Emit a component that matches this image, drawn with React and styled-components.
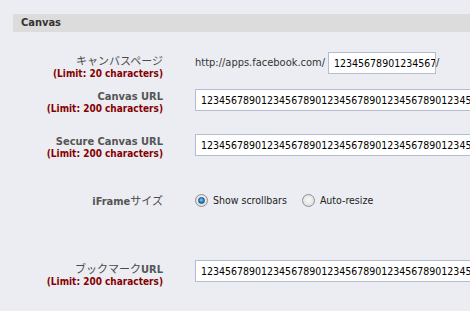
import React from 'react'
import styled, { createGlobalStyle } from 'styled-components'

const GlobalStyle = createGlobalStyle`
  html, body {
    margin: 0;
    padding: 0;
    background: #ecedf2;
    overflow: hidden;
  }
  body {
    font-family: "DejaVu Sans Condensed", "DejaVu Sans", "Noto Sans CJK JP", sans-serif;
    font-stretch: condensed;
    font-size: 11px;
    color: #333;
  }
`

const Page = styled.div`
  width: 457px;
  padding: 14px 0 0 13px;
  overflow: hidden;
`

const SectionHeader = styled.h3`
  margin: 0;
  height: 18px;
  line-height: 18px;
  padding-left: 8px;
  background: #dcdcdc;
  font-size: 11px;
  font-weight: bold;
  color: #333;
`

const Form = styled.div`
  margin-top: 20px;
`

const Row = styled.div`
  display: grid;
  grid-template-columns: 150px 1fr;
  column-gap: 32px;
  height: ${p => p.$h}px;
`

const Label = styled.div`
  text-align: right;
  font-weight: bold;
  color: #555;
  line-height: normal;
  padding-top: ${p => p.$pad || 0}px;
`

const Kana = styled.span`
  font-family: "Noto Sans CJK JP", sans-serif;
  font-weight: 400;
  color: #4a4a4a;
`

const Limit = styled.span`
  display: block;
  font-size: 10px;
  color: #850000;
`

const Field = styled.div`
  min-width: 0;
  display: flex;
  align-items: ${p => p.$center ? 'center' : 'flex-start'};
  height: ${p => p.$center ? '16px' : 'auto'};
`

const Prefix = styled.span`
  color: #333;
  line-height: 22px;
  margin-right: 3px;
  white-space: nowrap;
`

const Slash = styled.span`
  color: #333;
  line-height: 22px;
`

const TextInput = styled.input`
  box-sizing: border-box;
  flex: none;
  width: ${p => p.$w}px;
  height: 22px;
  margin: 0;
  padding: 0 ${p => p.$tight ? 0 : 4}px 0 5px;
  border: 1px solid #b4bcd0;
  background: #fff;
  font-family: "DejaVu Sans Condensed", "DejaVu Sans", sans-serif;
  font-stretch: condensed;
  font-size: 10.5px;
  color: #000;
  outline: none;
`

const RadioOption = styled.label`
  display: flex;
  align-items: center;
  gap: 5px;
  margin-right: 15px;
  font-size: 10.5px;
  color: #222;
  white-space: nowrap;
`

const RadioDot = styled.span`
  box-sizing: border-box;
  width: 13px;
  height: 13px;
  border-radius: 50%;
  border: 1px solid #8e8f8f;
  background: radial-gradient(circle at 50% 45%, #f8f8f8 0%, #e6e6e6 55%, #d2d2d2 100%);
  display: flex;
  align-items: center;
  justify-content: center;

  &::after {
    content: '';
    display: ${p => p.$checked ? 'block' : 'none'};
    width: 7px;
    height: 7px;
    border-radius: 50%;
    box-sizing: border-box;
    border: 1px solid #1d4f78;
    background: radial-gradient(circle at 45% 40%, #8ad6f8 0%, #2b8fd0 45%, #0f5d98 100%);
  }
`

const digits = '1234567890'.repeat(6)

export default function App() {
  return (
    <>
      <GlobalStyle />
      <Page>
        <SectionHeader>Canvas</SectionHeader>
        <Form>
          <Row $h={37}>
            <Label>
              <Kana>キャンバスページ</Kana>
              <Limit>(Limit: 20 characters)</Limit>
            </Label>
            <Field>
              <Prefix>http://apps.facebook.com/</Prefix>
              <TextInput $w={108} $tight defaultValue="12345678901234567890" readOnly />
              <Slash>/</Slash>
            </Field>
          </Row>
          <Row $h={45}>
            <Label $pad={1}>
              Canvas URL
              <Limit>(Limit: 200 characters)</Limit>
            </Label>
            <Field>
              <TextInput $w={320} defaultValue={digits} readOnly />
            </Field>
          </Row>
          <Row $h={58}>
            <Label $pad={1}>
              Secure Canvas URL
              <Limit>(Limit: 200 characters)</Limit>
            </Label>
            <Field>
              <TextInput $w={320} defaultValue={digits} readOnly />
            </Field>
          </Row>
          <Row $h={68}>
            <Label>
              iFrame<Kana>サイズ</Kana>
            </Label>
            <Field $center>
              <RadioOption>
                <RadioDot $checked />
                Show scrollbars
              </RadioOption>
              <RadioOption>
                <RadioDot />
                Auto-resize
              </RadioOption>
            </Field>
          </Row>
          <Row $h={40}>
            <Label>
              <Kana>ブックマーク</Kana>URL
              <Limit>(Limit: 200 characters)</Limit>
            </Label>
            <Field>
              <TextInput $w={320} defaultValue={digits} readOnly />
            </Field>
          </Row>
        </Form>
      </Page>
    </>
  )
}
